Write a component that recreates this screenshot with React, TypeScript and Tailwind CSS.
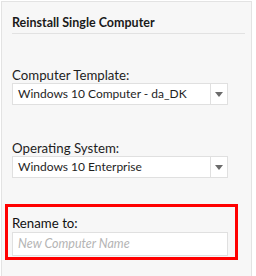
export default function App() {
  return (
    <div className="w-[256px] h-[276px] overflow-hidden bg-white pl-px pt-px" style={{ fontFamily: 'Lato, "Noto Sans", sans-serif' }}>
      <div className="w-[251px] h-[300px] bg-[#f7f7f7] border border-[#e3e3e3] pl-[10px] pr-[6px]">
        <h2 className="mt-[14px] text-[12.5px] font-bold leading-[14px] text-[#1a1a1a]">Reinstall Single Computer</h2>
        <div className="mt-[3px] h-px bg-[#e2e2e2]" />

        <label className="block mt-[33px] text-[13.25px] leading-[16px] text-[#1e1e1e]">Computer Template:</label>
        <div className="flex h-[22px] w-[216px] border border-[#e0e0e0] bg-white">
          <div className="flex-1 pl-[5px] text-[12px] leading-[20px] text-[#1e1e1e]">Windows 10 Computer - da_DK</div>
          <div className="flex w-[17px] items-center justify-center border-l border-[#e0e0e0]">
            <svg width="8" height="5" viewBox="0 0 8 5"><path d="M0 0h8L4 5z" fill="#6b6b6b" /></svg>
          </div>
        </div>

        <label className="block mt-[35px] text-[13.25px] leading-[16px] text-[#1e1e1e]">Operating System:</label>
        <div className="flex h-[22px] w-[216px] border border-[#e0e0e0] bg-white">
          <div className="flex-1 pl-[5px] text-[12px] leading-[20px] text-[#1e1e1e]">Windows 10 Enterprise</div>
          <div className="flex w-[17px] items-center justify-center border-l border-[#e0e0e0]">
            <svg width="8" height="5" viewBox="0 0 8 5"><path d="M0 0h8L4 5z" fill="#6b6b6b" /></svg>
          </div>
        </div>

        <div className="mt-[26px] -ml-[7px] w-[233px] h-[56px] border-[3px] border-[#ff0000] pl-[4px] pt-[8px]">
          <label className="block text-[13.25px] leading-[16px] text-[#111]">Rename to:</label>
          <div className="mt-[1px] h-[24px] w-[216px] border border-[#e0e0e0] bg-white pl-[5px] text-[12.5px] italic leading-[22px] text-[#b5b5b5]">New Computer Name</div>
        </div>
      </div>
    </div>
  )
}
